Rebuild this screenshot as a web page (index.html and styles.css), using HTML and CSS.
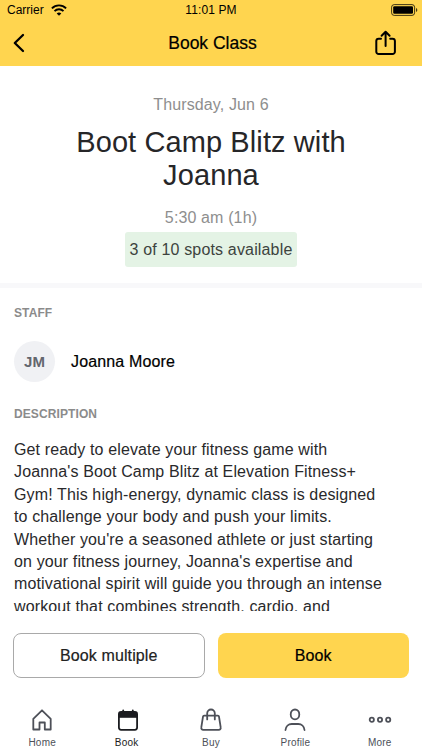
FILE: index.html
```html
<!DOCTYPE html>
<html lang="en">
<head>
    <meta charset="UTF-8">
    <meta name="viewport" content="width=device-width, initial-scale=1.0">
    <title>Book Class</title>
    <link rel="stylesheet" href="styles.css">
</head>
<body>
    <div class="screen">
        <header class="header">
            <div class="status-bar">
                <div class="carrier">
                    <span class="carrier-name">Carrier</span>
                    <svg width="16" height="12" viewBox="0 0 16 12" fill="none" stroke="#000" stroke-width="1.9">
                        <path d="M.9 4.4C4.8.4 11.2.4 15.1 4.4"/>
                        <path d="M3.500 7.100c2.500-2.500 6.500-2.500 9 0"/>
                        <path d="M8 11.800 5.700 9.400c1.300-1.200 3.300-1.200 4.600 0z" fill="#000" stroke="none"/>
                    </svg>
                </div>
                <span class="time">11:01 PM</span>
                <svg class="battery" width="27" height="12" viewBox="0 0 27 12">
                    <rect x=".6" y=".6" width="23" height="10.8" rx="2.6" fill="none" stroke="#000" stroke-opacity=".75"/>
                    <rect x="2.2" y="2.2" width="19.8" height="7.6" rx="1.2"/>
                    <path d="M25 4v4c1.800-.7 1.800-3.300 0-4z" fill-opacity=".75"/>
                </svg>
            </div>
            <div class="nav-bar">
                <svg class="back" width="12" height="20" viewBox="0 0 12 20" fill="none" stroke="#000" stroke-width="2.3" stroke-linecap="round" stroke-linejoin="round">
                    <path d="M10 2 1.800 10 10 18"/>
                </svg>
                <h1>Book Class</h1>
                <svg class="share" width="22" height="26" viewBox="0 0 22 26" fill="none" stroke="#000" stroke-width="2" stroke-linecap="round" stroke-linejoin="round">
                    <path d="M6 8.700H3.700a2.400 2.400 0 0 0-2.400 2.400v10.600a2.400 2.400 0 0 0 2.400 2.400h13.800a2.400 2.400 0 0 0 2.400-2.400V11.100a2.400 2.400 0 0 0-2.400-2.400h-2.300"/>
                    <path d="M10.600 16V2M6.600 5.800l4-4 4 4"/>
                </svg>
            </div>
        </header>

        <section class="summary">
            <p class="date">Thursday, Jun 6</p>
            <h2>Boot Camp Blitz with<br>Joanna</h2>
            <p class="hours">5:30 am (1h)</p>
            <span class="spots">3 of 10 spots available</span>
        </section>

        <main class="details">
            <h3>STAFF</h3>
            <div class="staff">
                <span class="avatar">JM</span>
                <span class="staff-name">Joanna Moore</span>
            </div>
            <h3>DESCRIPTION</h3>
            <p class="description">Get ready to elevate your fitness game with<br>
                Joanna's Boot Camp Blitz at Elevation Fitness+<br>
                Gym! This high-energy, dynamic class is designed<br>
                to challenge your body and push your limits.<br>
                Whether you're a seasoned athlete or just starting<br>
                on your fitness journey, Joanna's expertise and<br>
                motivational spirit will guide you through an intense<br>
                workout that combines strength, cardio, and</p>
        </main>

        <div class="actions">
            <button class="btn btn-outline">Book multiple</button>
            <button class="btn btn-primary">Book</button>
        </div>

        <nav class="tabs">
            <a class="tab">
                <svg width="24" height="24" viewBox="0 0 24 24">
                    <path d="M3.300 10.800 12 2.300l8.700 8.500V21.500h-5.900v-7H9.500v7H3.300z"/>
                </svg>
                <span>Home</span>
            </a>
            <a class="tab active">
                <svg width="24" height="24" viewBox="0 0 24 24">
                    <rect x="3.900" y="4" width="18.200" height="17.800" rx="2.200"/>
                    <path d="M4 4h18v5.800H4z" fill="#1b1c20" stroke="none"/>
                    <path d="M8.200 2.300V5M17.800 2.300V5"/>
                </svg>
                <span>Book</span>
            </a>
            <a class="tab">
                <svg width="24" height="24" viewBox="0 0 24 24">
                    <path d="M5.200 7.600h13.600a1.200 1.200 0 0 1 1.200 1l1.700 10.800a2 2 0 0 1-2 2.500H4.300a2 2 0 0 1-2-2.500L4 8.600a1.200 1.200 0 0 1 1.200-1z"/>
                    <path d="M8.200 11.400V5.300a3.800 3.800 0 0 1 7.600 0v6.100"/>
                </svg>
                <span>Buy</span>
            </a>
            <a class="tab">
                <svg width="24" height="24" viewBox="0 0 24 24">
                    <ellipse cx="12" cy="6.400" rx="4.300" ry="4.900"/>
                    <path d="M2.500 22c.3-3.800 3-6 6.200-6h6.600c3.200 0 5.900 2.200 6.200 6"/>
                </svg>
                <span>Profile</span>
            </a>
            <a class="tab">
                <svg width="24" height="24" viewBox="0 0 24 24">
                    <circle cx="3.800" cy="11.700" r="2.100"/>
                    <circle cx="12" cy="11.700" r="2.100"/>
                    <circle cx="20.200" cy="11.700" r="2.100"/>
                </svg>
                <span>More</span>
            </a>
        </nav>
    </div>
</body>
</html>
```

FILE: styles.css
```css
* {
    box-sizing: border-box;
}
body {
    margin: 0;
    font-family: "Liberation Sans", Arial, sans-serif;
    background-color: #fff;
    color: #000;
}
h1, h2, h3, p {
    margin: 0;
    font-weight: normal;
}
svg {
    display: block;
}
.screen {
    display: flex;
    flex-direction: column;
    height: 750px;
    overflow: hidden;
}
.header {
    flex: none;
    height: 66px;
    background-color: #ffd54f;
}
.status-bar {
    display: grid;
    grid-template-columns: 1fr auto 1fr;
    align-items: center;
    height: 20px;
    padding: 0 4px;
    font-size: 12px;
}
.carrier {
    display: flex;
    align-items: center;
    gap: 7px;
    padding-left: 3px;
}
.time {
    letter-spacing: 0.1px;
}
.battery {
    justify-self: end;
}
.nav-bar {
    display: grid;
    grid-template-columns: 1fr auto 1fr;
    align-items: center;
    height: 46px;
    padding: 0 10px 0 13px;
}
.nav-bar h1 {
    font-size: 17.5px;
    -webkit-text-stroke: 0.2px;
}
.share {
    justify-self: end;
    margin-right: 15px;
}
.summary {
    flex: none;
    display: flex;
    flex-direction: column;
    align-items: center;
    height: 222px;
    padding-top: 29px;
    border-bottom: 5px solid #f8f8fa;
    text-align: center;
}
.date, .hours {
    font-size: 16px;
    line-height: 20px;
    letter-spacing: 0.13px;
    color: #8e8e8e;
}
.summary h2 {
    margin: 11px 0 16px;
    font-size: 29px;
    line-height: 33px;
    letter-spacing: 0.1px;
    color: #262628;
}
.spots {
    margin-top: 4px;
    padding: 0 5px;
    border-radius: 3px;
    background-color: #e4f3e5;
    font-size: 16px;
    line-height: 35px;
    letter-spacing: 0.16px;
    color: #3d433e;
}
.details {
    flex: none;
    height: 323px;
    padding: 17px 14px 0;
    overflow: hidden;
}
.details h3 {
    font-size: 12px;
    font-weight: bold;
    line-height: 16px;
    letter-spacing: 0.1px;
    color: #8b8b8b;
}
.staff {
    display: flex;
    align-items: center;
    gap: 16px;
    margin: 20px 0 24px;
}
.avatar {
    width: 41px;
    height: 41px;
    border-radius: 50%;
    background-color: #f0f1f4;
    font-size: 15px;
    font-weight: bold;
    line-height: 41px;
    text-align: center;
    color: #63666e;
}
.staff-name {
    font-size: 16px;
    letter-spacing: 0.15px;
    -webkit-text-stroke: 0.2px;
}
.description {
    margin-top: 17px;
    font-size: 16px;
    line-height: 22.4px;
    letter-spacing: 0.13px;
    white-space: nowrap;
    color: #29292b;
}
.actions {
    flex: none;
    display: flex;
    gap: 13px;
    padding: 22px 13px 0;
}
.btn {
    width: 50%;
    height: 45px;
    padding: 0;
    border: none;
    border-radius: 8px;
    font-family: inherit;
    font-size: 16px;
    letter-spacing: 0.12px;
    -webkit-text-stroke: 0.2px;
}
.btn-outline {
    border: 1px solid #a9a9a9;
    background-color: #fff;
    color: #222;
}
.btn-primary {
    background-color: #ffd54f;
    color: #000;
}
.tabs {
    flex: none;
    display: grid;
    grid-template-columns: repeat(5, 1fr);
    padding-top: 30px;
}
.tab {
    display: flex;
    flex-direction: column;
    align-items: center;
    gap: 4px;
    font-size: 10px;
    line-height: 13px;
    letter-spacing: 0.2px;
    color: #4d5058;
}
.tab svg {
    fill: none;
    stroke: #4d5058;
    stroke-width: 1.8;
    stroke-linecap: round;
    stroke-linejoin: round;
}
.active {
    color: #1b1c20;
}
.active svg {
    stroke: #1b1c20;
}
```
